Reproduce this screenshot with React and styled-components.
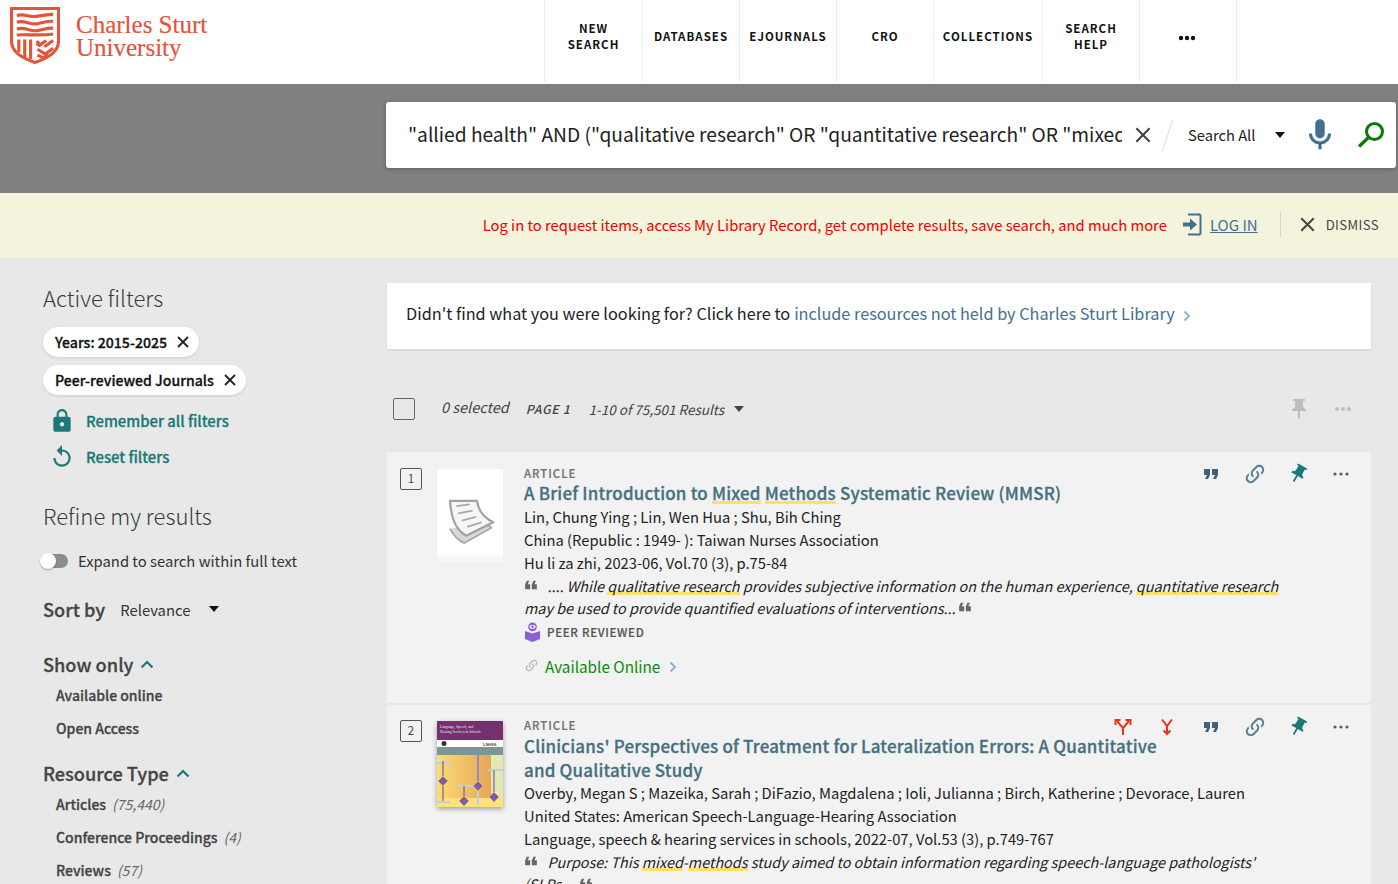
import React from 'react';
import styled, { createGlobalStyle, css } from 'styled-components';

const SANS = '"Noto Sans CJK SC", "Noto Sans", sans-serif';
const semibold = css`font-weight: 500; -webkit-text-stroke: .28px currentColor;`;

const Global = createGlobalStyle`
  html, body { margin: 0; padding: 0; background: #e8e8e8; }
  body { font-family: ${SANS}; color: #222; overflow: hidden; }
  * { box-sizing: border-box; }
`;

const Page = styled.div`width: 1398px; height: 884px; overflow: hidden; background: #e8e8e8;`;
const Gap = styled.span`display: block; flex: none; width: ${p => p.$w || 0}px; height: ${p => p.$h || 0}px;`;

/* ---------- header ---------- */
const Header = styled.header`height: 84px; background: #fff; display: flex; justify-content: space-between;`;
const Brand = styled.div`display: flex; align-items: flex-start; padding: 7px 0 0 10px; gap: 16px;`;
const BrandText = styled.div`
  font-family: "Liberation Serif", serif; font-size: 25px; line-height: 23px; color: #e2553b; padding-top: 6px;
  -webkit-text-stroke: .2px currentColor;
`;
const Nav = styled.nav`display: flex; height: 82px; margin-right: 161px; border-left: 1px solid #ececec;`;
const NavItem = styled.div`
  width: ${p => p.$w}px; border-right: 1px solid #ececec; display: flex; align-items: center; justify-content: center;
  text-align: center; padding-bottom: 10px;
  font-weight: 700; font-size: 11.5px; line-height: 16px; letter-spacing: 1px; color: #111;
`;
const NavDots = styled.span`display: flex; margin: 4px 2px 0 0;`;

/* ---------- search ---------- */
const SearchBand = styled.div`height: 109px; background: #808080; padding: 18px 2px 0 0; display: flex; justify-content: flex-end;`;
const SearchBox = styled.div`
  width: 1010px; height: 66px; background: #fff; border-radius: 3px; box-shadow: 0 1px 4px rgba(0,0,0,.25);
  display: flex; align-items: center; padding-left: 22px;
`;
const Query = styled.div`
  flex: none; width: 714px; overflow: hidden; white-space: nowrap; font-size: 19.2px; line-height: 30px; color: #222; margin-top: -3px;
`;
const Slash = styled.div`flex: none; width: 1px; height: 33px; background: #ddd; transform: rotate(18deg); margin: 0 20px 0 16px;`;
const Scope = styled.div`flex: none; font-size: 14.7px; line-height: 20px; color: #222; width: 67px; white-space: nowrap;`;
const Caret = styled.span`
  display: inline-block; flex: none; width: 0; height: 0; border-left: 5.5px solid transparent; border-right: 5.5px solid transparent;
  border-top: 6px solid ${p => p.$c || '#111'};
`;

/* ---------- banner ---------- */
const Banner = styled.div`
  height: 66px; background: #f4f4dc; border-bottom: 1px solid #e6e6e6; display: flex; align-items: center; justify-content: flex-end; padding: 0 19px 2px 0;
`;
const BannerMsg = styled.span`font-size: 14.77px; line-height: 20px; color: #f00000; margin-right: 16px;`;
const LogIn = styled.a`font-size: 15px; line-height: 20px; color: #44708f; text-decoration: underline; margin-left: 8px;`;
const Rule = styled.span`width: 1px; height: 25px; background: #d8d8c6; margin: 0 19px 0 22px;`;
const Dismiss = styled.span`font-size: 13.1px; line-height: 20px; letter-spacing: .4px; color: #444; margin-left: 11px;`;

/* ---------- layout ---------- */
const Main = styled.div`display: flex;`;
const Side = styled.aside`width: 387px; padding: 23px 0 0 43px; flex: none;`;
const Content = styled.main`width: 984px; padding-top: 24px;`;

/* ---------- sidebar ---------- */
const SideTitle = styled.h2`margin: 0; font-size: 22.1px; line-height: 30px; font-weight: 300; color: #3b3b3b;`;
const Chips = styled.div`display: flex; flex-direction: column; align-items: flex-start; gap: 8px; margin-top: 15px;`;
const Chip = styled.div`
  height: 30px; background: #fff; border-radius: 15px; display: flex; align-items: center; gap: 10px; padding: 0 10px 0 12px;
  box-shadow: 0 1px 3px rgba(0,0,0,.12); font-size: 14.1px; ${semibold} color: #111; line-height: 20px;
`;
const FilterLinks = styled.div`margin-top: 8px;`;
const FilterLink = styled.div`
  display: flex; align-items: center; gap: 11px; padding-left: 6px; height: 36px;
  color: #1a7a78; font-size: 14.8px; ${semibold} line-height: 20px;
`;
const Toggle = styled.div`display: flex; align-items: center; gap: 10px; margin-top: 19px; height: 24px; font-size: 14.8px; color: #333; line-height: 20px; margin-left: -2px;`;
const Track = styled.div`position: relative; width: 27px; height: 14px; background: #8c8c8c; border-radius: 7px;`;
const Knob = styled.div`position: absolute; left: -1px; top: -1px; width: 16px; height: 16px; border-radius: 50%; background: #fff; box-shadow: 0 1px 2px rgba(0,0,0,.3);`;
const SortRow = styled.div`display: flex; align-items: center; margin-top: 23px; height: 26px;`;
const FacetHead = styled.div`font-size: 18.2px; ${semibold} line-height: 26px; color: #444; display: flex; align-items: center; gap: 7px; margin-top: ${p => p.$top || 0}px;`;
const SortValue = styled.span`font-size: 14.85px; color: #333; line-height: 20px; margin: 1px 19px 0 15px;`;
const FacetList = styled.ul`list-style: none; margin: 0; padding: ${p => p.$pt}px 0 0 13px;`;
const Facet = styled.li`height: 33px; display: flex; align-items: center; gap: 6px; font-size: 14px; ${semibold} color: #444; line-height: 20px;`;
const Count = styled.span`font-style: italic; font-weight: 400; -webkit-text-stroke: 0; color: #666;`;

/* ---------- notice & toolbar ---------- */
const Notice = styled.div`
  height: 66px; background: #fff; box-shadow: 0 1px 2px rgba(0,0,0,.1); display: flex; align-items: center; padding: 0 0 6px 19px; gap: 4px;
  font-size: 16.25px; line-height: 24px; color: #222;
`;
const NoticeLink = styled.span`color: #44708f;`;
const NoticeArrow = styled.span`display: flex; margin: 5px 0 0 4px;`;
const Toolbar = styled.div`height: 103px; display: flex; align-items: center; padding: 16px 19px 0 6px; color: #444;`;
const Check = styled.div`width: 22px; height: 22px; border: 1px solid #666; border-radius: 2px; margin-right: 26px;`;
const Selected = styled.span`font-size: 14.5px; font-style: italic; margin-right: 17px; line-height: 20px; margin-top: -3px;`;
const PageNo = styled.span`font-size: 12.3px; font-style: italic; font-weight: 500; letter-spacing: .7px; margin-right: 18px; line-height: 20px;`;
const Range = styled.span`font-size: 13.5px; font-style: italic; line-height: 20px; margin-right: 10px;`;
const Spacer = styled.span`flex: 1;`;

/* ---------- results ---------- */
const Result = styled.article`
  background: #f2f2f2; border-bottom: 1px solid #e6e6e6; display: grid; grid-template-columns: 137px 760px 1fr;
  height: ${p => p.$h}px; padding-top: ${p => p.$pad}px; position: relative; margin-bottom: 1px;
`;
const Left = styled.div`display: flex; align-items: flex-start; padding-left: 13px; gap: 15px;`;
const Num = styled.div`
  width: 22px; height: 22px; border: 1px solid #555; border-radius: 2px; font-size: 11.5px; line-height: 18px; text-align: center; color: #444; flex: none; margin-top: 2px;
`;
const Body = styled.div`min-width: 0;`;
const Type = styled.div`font-size: 11.4px; ${semibold} -webkit-text-stroke-width: .2px; letter-spacing: 1px; line-height: 16px; color: #737373; margin: -1px 0 1px;`;
const Title = styled.h3`margin: ${p => p.$mt || 0}px 0 ${p => p.$mb || 0}px; width: 640px; white-space: ${p => p.$nowrap ? 'nowrap' : 'normal'}; font-size: 16.95px; ${semibold} letter-spacing: .2px; line-height: 24px; color: #44707f;`;
const Line = styled.div`font-size: 14.75px; line-height: 23.2px; color: #222; white-space: nowrap;`;
const Snippet = styled.div`font-size: 14.4px; font-style: italic; line-height: 22.5px; color: #222; width: 760px;`;
const Hit = styled.span`background: linear-gradient(#ffe265, #ffe265) 0 calc(100% - 1px) / 100% 3px no-repeat;`;
const Peer = styled.div`display: flex; align-items: center; gap: 6px; height: 24px; font-size: 11.5px; ${semibold} -webkit-text-stroke-width: .2px; letter-spacing: .7px; color: #555;`;
const Avail = styled.div`display: flex; align-items: center; gap: 6px; margin-top: 10px; height: 24px; font-size: 15.3px; line-height: 22px; color: #0a8a0a;`;
const AvailArrow = styled.span`display: flex; margin: 2px 0 0 3px;`;
const Actions = styled.div`position: absolute; right: 0; top: 0; display: flex; justify-content: flex-end; align-items: center; padding-right: 8px; height: 44px;`;
const ActionSlot = styled.span`display: flex; align-items: center; justify-content: center; width: 44px; margin-left: ${p => p.$ml || 0}px;`;
const QuoteMark = styled.svg`transform: rotate(180deg); vertical-align: 3px; margin: -6px 0 -6px ${p => p.$lead ? -3 : 0}px; fill: #666;`;
const TiltedPin = styled.svg`transform: rotate(30deg); fill: #1a7a78; margin-right: 2px;`;

/* ---------- icons ---------- */
const Icon = ({ d, s = 20, c = '#555' }) => (
  <svg width={s} height={s} viewBox="0 0 24 24" fill={c}><path d={d} /></svg>
);
const PIN = 'M16 9V4h1c.55 0 1-.45 1-1s-.45-1-1-1H7c-.55 0-1 .45-1 1s.45 1 1 1h1v5c0 1.66-1.34 3-3 3v2h5.97v7l1 1 1-1v-7H19v-2c-1.66 0-3-1.34-3-3z';
const QUOTE = 'M6 17h3l2-4V7H5v6h3zm8 0h3l2-4V7h-6v6h3z';
const LOCK = 'M18 8h-1V6c0-2.76-2.24-5-5-5S7 3.24 7 6v2H6c-1.1 0-2 .9-2 2v10c0 1.1.9 2 2 2h12c1.1 0 2-.9 2-2V10c0-1.1-.9-2-2-2zm-6 9c-1.1 0-2-.9-2-2s.9-2 2-2 2 .9 2 2-.9 2-2 2zm3.1-9H8.9V6c0-1.71 1.39-3.1 3.1-3.1 1.71 0 3.1 1.39 3.1 3.1v2z';
const RESET = 'M12 5V1L7 6l5 5V7c3.31 0 6 2.69 6 6s-2.69 6-6 6-6-2.69-6-6H4c0 4.42 3.58 8 8 8s8-3.58 8-8-3.58-8-8-8z';
const MIC = 'M12 14c1.66 0 3-1.34 3-3V5c0-1.66-1.34-3-3-3S9 3.34 9 5v6c0 1.66 1.34 3 3 3z M17 11c0 2.76-2.24 5-5 5s-5-2.24-5-5H5c0 3.53 2.61 6.43 6 6.92V21h2v-3.08c3.39-.49 6-3.39 6-6.92h-2z';
const LINK = 'M10.59,13.41C11,13.8 11,14.44 10.59,14.83C10.2,15.22 9.56,15.22 9.17,14.83C7.22,12.88 7.22,9.71 9.17,7.76V7.76L12.71,4.22C14.66,2.27 17.83,2.27 19.78,4.22C21.73,6.17 21.73,9.34 19.78,11.29L18.29,12.78C18.3,11.96 18.17,11.14 17.89,10.36L18.36,9.88C19.54,8.71 19.54,6.81 18.36,5.64C17.19,4.46 15.29,4.46 14.12,5.64L10.59,9.17C9.41,10.34 9.41,12.24 10.59,13.41M13.41,9.17C13.8,8.78 14.44,8.78 14.83,9.17C16.78,11.12 16.78,14.29 14.83,16.24V16.24L11.29,19.78C9.34,21.73 6.17,21.73 4.22,19.78C2.27,17.83 2.27,14.66 4.22,12.71L5.71,11.22C5.7,12.04 5.83,12.86 6.11,13.65L5.64,14.12C4.46,15.29 4.46,17.19 5.64,18.36C6.81,19.54 8.71,19.54 9.88,18.36L13.41,14.83C14.59,13.66 14.59,11.76 13.41,10.59C13,10.2 13,9.56 13.41,9.17Z';

const Cross = ({ s = 12, c = '#222', w = 1.8 }) => (
  <svg width={s} height={s} viewBox="0 0 12 12" stroke={c} strokeWidth={w} fill="none"><path d="M1 1l10 10M11 1L1 11" /></svg>
);
const Dots = ({ c = '#44607a', w = 18, r = 1.6 }) => (
  <svg width={w} height="6" viewBox="0 0 18 6" fill={c}><circle cx="3" cy="3" r={r} /><circle cx="9" cy="3" r={r} /><circle cx="15" cy="3" r={r} /></svg>
);
const ChevronUp = ({ c = '#1a7a78' }) => (
  <svg width="14" height="12" viewBox="0 0 14 12" fill="none" stroke={c} strokeWidth="2.2"><path d="M1.500 9.500L7 4l5.500 5.500" /></svg>
);
const ChevronRight = ({ c = '#8faec4' }) => (
  <svg width="8" height="12" viewBox="0 0 8 12" fill="none" stroke={c} strokeWidth="1.8"><path d="M1.500 1.500l4.500 4.500-4.500 4.500" /></svg>
);

const Logo = () => (
  <svg width="50" height="57" viewBox="0 0 51 58" fill="none" stroke="#e2553b">
    <path d="M1.500 1.500h48v33c0 11-9.500 17-24 22-14.500-5-24-11-24-22z" strokeWidth="3.200" />
    <g strokeWidth="3.200">
      <path d="M7 8.500c8-2 12 2 20 1s10-2 17-2" />
      <path d="M7 15.500c8-3 13 3 21 1.500s10-3 16-2.500" />
      <path d="M7 22.500c8-3 13 3 21 1.500s10-3 16-2.500" />
      <path d="M7 28.500c9-1 22 1 37-1" />
      <path d="M9 33v13M15 33v18M21 33v20" />
      <path d="M27 35l3 2M37 34l-7 5-3-2M44 34l-9 6.500M28 43l8 5 8-6M28 49l6 3 5-3" />
    </g>
  </svg>
);

const LoginIcon = () => (
  <svg width="19" height="23" viewBox="0 0 19 23" fill="none">
    <path d="M5 1.500h11.500a1.500 1.500 0 0 1 1 1.500v17a1.500 1.500 0 0 1-1 1.500H5" stroke="#44708f" strokeWidth="2" />
    <path d="M0 9.500h7V5.500l7 6-7 6v-4H0z" fill="#44708f" />
  </svg>
);

const SearchIcon = () => (
  <svg width="28" height="28" viewBox="0 0 28 28" fill="none" stroke="#0a7a0a">
    <circle cx="17.500" cy="10.500" r="8" strokeWidth="3" />
    <path d="M11.500 16.500L2 25.500" strokeWidth="3.200" />
  </svg>
);

const PeerIcon = () => (
  <svg width="17" height="20" viewBox="0 0 18 21">
    <circle cx="9" cy="5" r="4.600" fill="#8a5fd6" />
    <ellipse cx="9" cy="5" rx="3.200" ry="2.200" fill="#f2f2f2" />
    <circle cx="9" cy="5" r="1.300" fill="#8a5fd6" />
    <path d="M1 9.500l8 2.500 8-2.500v8.500l-8 3-8-3z" fill="#8a5fd6" />
  </svg>
);

const Fork = ({ down }) => (
  <svg width="18" height="18" viewBox="0 0 18 18" fill="none" stroke="#e8321c" strokeWidth="2" strokeLinejoin="miter">
    {down ? (
      <>
        <path d="M4 1.500l5 6.500 5-6.500M9 8v8" />
        <path d="M5.500 12.500L9 16l3.500-3.500" />
      </>
    ) : (
      <>
        <path d="M9 17V10L3 3M9 10l6-7" />
        <path d="M1.500 7V2h5M16.500 7V2h-5" />
      </>
    )}
  </svg>
);

const DocThumb = styled.div`width: 66px; height: 97px; background: linear-gradient(#fff 85%, #eee); flex: none; display: flex; align-items: center; justify-content: center; margin-top: 3px; padding: 7px 4px 0 0;`;
const CoverThumb = styled.div`width: 66px; height: 86px; flex: none; box-shadow: 0 2px 5px rgba(0,0,0,.35); margin-top: 3px; line-height: 0;`;
const BlurredArt = styled.svg`filter: blur(.5px);`;

const DocArt = () => (
  <BlurredArt width="54" height="50" viewBox="0 0 60 55" fill="none" strokeLinejoin="round">
    <path d="M10 36c4 8 8 13 16 16l30-17-6-5" fill="#d8d8d8" stroke="#a8a8a8" strokeWidth="2" />
    <path d="M10 5l30 0c1 8 4 17 18 24L28 44C14 36 11 20 10 5z" fill="#f6f6f6" stroke="#a2a2a2" strokeWidth="2.500" />
    <path d="M17 11l15-2M19 19l16-3M23 27l16-4M29 34l16-5" stroke="#a8a8a8" strokeWidth="2" />
  </BlurredArt>
);

const CoverArt = () => (
  <svg width="66" height="86" viewBox="0 0 66 86">
    <defs>
      <linearGradient id="g" x1="0" x2="1"><stop offset="0" stopColor="#fbdc74" /><stop offset="1" stopColor="#e29a52" /></linearGradient>
    </defs>
    <rect width="66" height="86" fill="url(#g)" />
    <rect width="66" height="19" fill="#75306e" />
    <text x="3" y="7" fontSize="3.600" fill="#eee" fontFamily="Liberation Serif, serif">Language, Speech, and</text>
    <text x="3" y="12" fontSize="3.600" fill="#eee" fontFamily="Liberation Serif, serif">Hearing Services in Schools</text>
    <rect y="19" width="66" height="7" fill="#fff" />
    <circle cx="7" cy="22.500" r="2.500" fill="#333" />
    <text x="46" y="24.500" fontSize="4" fontWeight="700" fill="#444" fontFamily="Liberation Sans, sans-serif">LSHSS</text>
    <rect y="26" width="66" height="8" fill="#7e9594" />
    <rect x="54" y="34" width="12" height="52" fill="#e3e8b4" />
    <rect y="77" width="66" height="9" fill="#fde27a" />
    <g stroke="#b9d3e2" strokeWidth="2"><path d="M0 42h15M19 65h17M51 49h15M0 81h13M41 34v50" /></g>
    <g stroke="#76609f" strokeWidth="1.200"><path d="M6 40v40M41 34v28M27 65v16M57 49v32" /></g>
    <g fill="#7a5ca8" stroke="#e6b26a" strokeWidth="1">
      <path d="M6 55l5 5-5 5-5-5zM41 60l5 5-5 5-5-5zM27 75l5 5-5 5-5-5zM57 71l5 5-5 5-5-5z" />
    </g>
  </svg>
);

const ResultActions = () => (
  <>
    <ActionSlot><Icon d={QUOTE} c="#44607a" s={24} /></ActionSlot>
    <ActionSlot><Icon d={LINK} c="#5a7f99" s={24} /></ActionSlot>
    <ActionSlot><TiltedPin width="22" height="22" viewBox="0 0 24 24"><path d={PIN} /></TiltedPin></ActionSlot>
    <ActionSlot $ml={-2}><Dots /></ActionSlot>
  </>
);

const Quote = ({ lead }) => <QuoteMark $lead={lead} width="20" height="20" viewBox="0 0 24 24"><path d={QUOTE} /></QuoteMark>;

export default function App() {
  return (
    <Page>
      <Global />
      <Header>
        <Brand>
          <Logo />
          <BrandText>Charles Sturt<br />University</BrandText>
        </Brand>
        <Nav>
          <NavItem $w={98}>NEW<br />SEARCH</NavItem>
          <NavItem $w={97}>DATABASES</NavItem>
          <NavItem $w={97}>EJOURNALS</NavItem>
          <NavItem $w={97}>CRO</NavItem>
          <NavItem $w={109}>COLLECTIONS</NavItem>
          <NavItem $w={97}>SEARCH<br />HELP</NavItem>
          <NavItem $w={97}><NavDots><Dots c="#111" r={2.2} /></NavDots></NavItem>
        </Nav>
      </Header>

      <SearchBand>
        <SearchBox>
          <Query>"allied health" AND ("qualitative research" OR "quantitative research" OR "mixed methods")</Query>
          <Gap $w={13} />
          <Cross s={16} c="#444" w={1.6} />
          <Slash />
          <Scope>Search All</Scope>
          <Gap $w={20} />
          <Caret />
          <Gap $w={16} />
          <Icon d={MIC} c="#44708f" s={38} />
          <Gap $w={18} />
          <SearchIcon />
        </SearchBox>
      </SearchBand>

      <Banner>
        <BannerMsg>Log in to request items, access My Library Record, get complete results, save search, and much more</BannerMsg>
        <LoginIcon />
        <LogIn>LOG IN</LogIn>
        <Rule />
        <Cross s={15} c="#444" w={1.6} />
        <Dismiss>DISMISS</Dismiss>
      </Banner>

      <Main>
        <Side>
          <SideTitle>Active filters</SideTitle>
          <Chips>
            <Chip>Years: 2015-2025 <Cross /></Chip>
            <Chip>Peer-reviewed Journals <Cross /></Chip>
          </Chips>
          <FilterLinks>
            <FilterLink><Icon d={LOCK} c="#1a7a78" s={26} />Remember all filters</FilterLink>
            <FilterLink><Icon d={RESET} c="#1a7a78" s={26} />Reset filters</FilterLink>
          </FilterLinks>
          <Gap $h={25} />
          <SideTitle>Refine my results</SideTitle>
          <Toggle><Track><Knob /></Track>Expand to search within full text</Toggle>
          <SortRow>
            <FacetHead>Sort by</FacetHead>
            <SortValue>Relevance</SortValue>
            <Caret />
          </SortRow>
          <FacetHead $top={29}>Show only <ChevronUp /></FacetHead>
          <FacetList $pt={1}>
            <Facet>Available online</Facet>
            <Facet>Open Access</Facet>
          </FacetList>
          <FacetHead $top={16}>Resource Type <ChevronUp /></FacetHead>
          <FacetList $pt={1}>
            <Facet>Articles <Count>(75,440)</Count></Facet>
            <Facet>Conference Proceedings <Count>(4)</Count></Facet>
            <Facet>Reviews <Count>(57)</Count></Facet>
          </FacetList>
        </Side>

        <Content>
          <Notice>
            Didn't find what you were looking for? Click here to <NoticeLink>include resources not held by Charles Sturt Library</NoticeLink>
            <NoticeArrow><ChevronRight /></NoticeArrow>
          </Notice>
          <Toolbar>
            <Check />
            <Selected>0 selected</Selected>
            <PageNo>PAGE 1</PageNo>
            <Range>1-10 of 75,501 Results</Range>
            <Caret $c="#444" />
            <Spacer />
            <Icon d={PIN} c="#bdbdbd" s={24} />
            <Gap $w={23} />
            <Dots c="#bdbdbd" w={18} r={2} />
          </Toolbar>

          <Result $h={252} $pad={14}>
            <Left>
              <Num>1</Num>
              <DocThumb><DocArt /></DocThumb>
            </Left>
            <Body>
              <Type>ARTICLE</Type>
              <Title $mt={-1} $nowrap>A Brief Introduction to <Hit>Mixed</Hit> <Hit>Methods</Hit> Systematic Review (MMSR)</Title>
              <Line>Lin, Chung Ying ; Lin, Wen Hua ; Shu, Bih Ching</Line>
              <Line>China (Republic : 1949- ): Taiwan Nurses Association</Line>
              <Line>Hu li za zhi, 2023-06, Vol.70 (3), p.75-84</Line>
              <Snippet>
                <Quote lead />&nbsp; .... While <Hit>qualitative research</Hit> provides subjective information on the human experience, <Hit>quantitative research</Hit> may be used to provide quantified evaluations of interventions...<Quote />
              </Snippet>
              <Peer><PeerIcon />PEER REVIEWED</Peer>
              <Avail>
                <Icon d={LINK} c="#b5b5b5" s={15} />
                Available Online
                <AvailArrow><ChevronRight /></AvailArrow>
              </Avail>
            </Body>
            <Actions><ResultActions /></Actions>
          </Result>

          <Result $h={300} $pad={13}>
            <Left>
              <Num>2</Num>
              <CoverThumb><CoverArt /></CoverThumb>
            </Left>
            <Body>
              <Type>ARTICLE</Type>
              <Title $mb={-1}>Clinicians' Perspectives of Treatment for Lateralization Errors: A Quantitative and Qualitative Study</Title>
              <Line>Overby, Megan S ; Mazeika, Sarah ; DiFazio, Magdalena ; Ioli, Julianna ; Birch, Katherine ; Devorace, Lauren</Line>
              <Line>United States: American Speech-Language-Hearing Association</Line>
              <Line>Language, speech &amp; hearing services in schools, 2022-07, Vol.53 (3), p.749-767</Line>
              <Snippet>
                <Quote lead />&nbsp; Purpose: This <Hit>mixed</Hit>-<Hit>methods</Hit> study aimed to obtain information regarding speech-language pathologists' (SLPs... <Quote />
              </Snippet>
            </Body>
            <Actions>
              <ActionSlot><Fork /></ActionSlot>
              <ActionSlot><Fork down /></ActionSlot>
              <ResultActions />
            </Actions>
          </Result>
        </Content>
      </Main>
    </Page>
  );
}
